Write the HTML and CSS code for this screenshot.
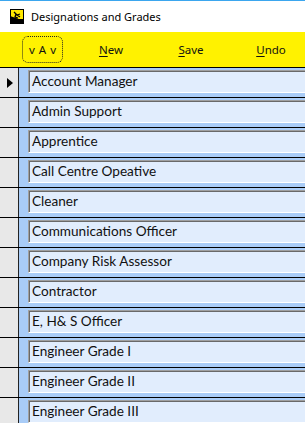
FILE: index.html
```html
<!DOCTYPE html>
<html lang="en">
<head>
<meta charset="UTF-8">
<meta name="viewport" content="width=device-width, initial-scale=1.0">
<title>Designations and Grades</title>
<link rel="stylesheet" href="styles.css">
</head>
<body>

<div class="window">
    <!-- Title bar -->
    <div class="titlebar">
        <svg class="app-icon" width="14" height="15" viewBox="0 0 14 15">
            <rect x="0.5" y="0.5" width="13" height="14" fill="#ffe800" stroke="#000"/>
            <polygon points="0,7 0,15 14,15 14,10 9,10" fill="#000"/>
            <path d="M4 3 L7 6 L10 5 M6 5 L5 8 L8 9 M7 6 L10 8" stroke="#000" stroke-width="1.3" fill="none"/>
        </svg>
        <span class="title">Designations and Grades</span>
    </div>

    <!-- Toolbar -->
    <div class="toolbar">
        <div class="tool nav">v A v</div>
        <div class="tool"><u>N</u>ew</div>
        <div class="tool"><u>S</u>ave</div>
        <div class="tool"><u>U</u>ndo</div>
    </div>

    <!-- Records -->
    <div class="records">
        <div class="row current">
            <div class="selector">
                <svg width="6" height="10" viewBox="0 0 6 10"><polygon points="0,0 6,5 0,10" fill="#000"/></svg>
            </div>
            <div class="cell"><div class="field">Account Manager</div></div>
        </div>
        <div class="row">
            <div class="selector"></div>
            <div class="cell"><div class="field">Admin Support</div></div>
        </div>
        <div class="row">
            <div class="selector"></div>
            <div class="cell"><div class="field">Apprentice</div></div>
        </div>
        <div class="row">
            <div class="selector"></div>
            <div class="cell"><div class="field">Call Centre Opeative</div></div>
        </div>
        <div class="row">
            <div class="selector"></div>
            <div class="cell"><div class="field">Cleaner</div></div>
        </div>
        <div class="row">
            <div class="selector"></div>
            <div class="cell"><div class="field">Communications Officer</div></div>
        </div>
        <div class="row">
            <div class="selector"></div>
            <div class="cell"><div class="field">Company Risk Assessor</div></div>
        </div>
        <div class="row">
            <div class="selector"></div>
            <div class="cell"><div class="field">Contractor</div></div>
        </div>
        <div class="row">
            <div class="selector"></div>
            <div class="cell"><div class="field">E, H&amp; S Officer</div></div>
        </div>
        <div class="row">
            <div class="selector"></div>
            <div class="cell"><div class="field">Engineer Grade I</div></div>
        </div>
        <div class="row">
            <div class="selector"></div>
            <div class="cell"><div class="field">Engineer Grade II</div></div>
        </div>
        <div class="row">
            <div class="selector"></div>
            <div class="cell"><div class="field">Engineer Grade III</div></div>
        </div>
    </div>
</div>

</body>
</html>
```

FILE: styles.css
```css
* {
    box-sizing: border-box;
}
body {
    margin: 0;
    background-color: #fff;
    overflow: hidden;
}
.window {
    width: 305px;
    height: 423px;
    overflow: hidden;
}

/* Title bar */
.titlebar {
    height: 32px;
    display: flex;
    align-items: center;
    padding-left: 10px;
    background-color: #fff;
    border-top: 1px solid #3ba6ee;
    font-family: "Noto Sans", sans-serif;
    font-size: 11px;
    color: #000;
}
.app-icon {
    margin-right: 7px;
}

/* Toolbar */
.toolbar {
    height: 36px;
    display: flex;
    align-items: center;
    padding-left: 22px;
    background-color: #fff200;
    border-bottom: 1px solid #000;
    font-family: "Noto Sans", sans-serif;
    font-size: 11.5px;
    color: #111;
}
.tool {
    width: 80px;
    flex-shrink: 0;
    text-align: center;
}
.tool u {
    text-underline-offset: 2px;
}
.nav {
    width: 41px;
    height: 27px;
    margin-right: 8px;
    line-height: 25px;
    border: 1px dotted #222;
    border-radius: 6px;
    word-spacing: 1px;
}

/* Records */
.row {
    display: flex;
    height: 30px;
    border-bottom: 1px solid #000;
}
.selector {
    width: 19px;
    flex-shrink: 0;
    background-color: #e8e8e8;
    border-right: 1px solid #222;
    display: flex;
    align-items: center;
    padding-left: 7px;
}
.cell {
    flex: 1;
    background-color: #a9ccf7;
    padding: 2px 0 0 9px;
}
.field {
    width: 300px;
    height: 23px;
    background-color: #e1edfd;
    border-top: 1px solid #a0a0a0;
    border-left: 1px solid #a0a0a0;
    border-bottom: 1px solid #fff;
    box-shadow: inset 1px 1px 0 #696969;
    padding: 0 0 0 3px;
    font-family: Lato, sans-serif;
    font-size: 13.6px;
    line-height: 21px;
    color: #111;
    white-space: nowrap;
}
```
